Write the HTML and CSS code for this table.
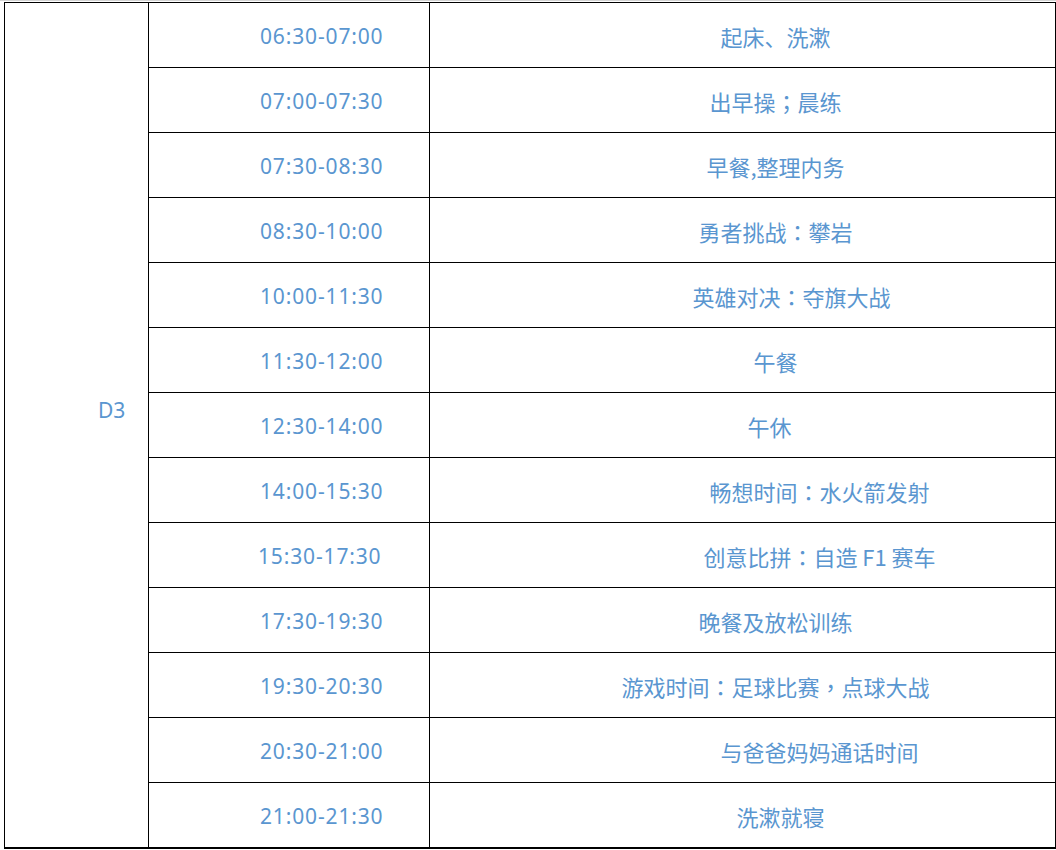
FILE: index.html
```html
<!DOCTYPE html>
<html lang="zh-CN">
<head>
<meta charset="utf-8">
<title>D3 日程</title>
<link rel="stylesheet" href="styles.css">
</head>
<body>
<div class="topline"></div>
<table class="schedule">
  <colgroup>
    <col class="c-day">
    <col class="c-time">
    <col class="c-act">
  </colgroup>
  <tbody>
    <tr>
      <td class="day" rowspan="13"><span class="day-label">D3</span></td>
      <td class="time">06:30-07:00</td>
      <td class="act">起床、洗漱</td>
    </tr>
    <tr><td class="time">07:00-07:30</td><td class="act">出早操<span class="fw" lang="zh-TW">；</span>晨练</td></tr>
    <tr><td class="time">07:30-08:30</td><td class="act">早餐,整理内务</td></tr>
    <tr><td class="time">08:30-10:00</td><td class="act">勇者挑战<span class="fw" lang="zh-TW">：</span>攀岩</td></tr>
    <tr><td class="time">10:00-11:30</td><td class="act shift-a">英雄对决<span class="fw" lang="zh-TW">：</span>夺旗大战</td></tr>
    <tr><td class="time">11:30-12:00</td><td class="act">午餐</td></tr>
    <tr><td class="time">12:30-14:00</td><td class="act shift-n">午休</td></tr>
    <tr><td class="time">14:00-15:30</td><td class="act shift-b">畅想时间<span class="fw" lang="zh-TW">：</span>水火箭发射</td></tr>
    <tr><td class="time time-wide">15:30-17:30</td><td class="act shift-b">创意比拼<span class="fw" lang="zh-TW">：</span>自造 F1 赛车</td></tr>
    <tr><td class="time">17:30-19:30</td><td class="act">晚餐及放松训练</td></tr>
    <tr><td class="time">19:30-20:30</td><td class="act">游戏时间<span class="fw" lang="zh-TW">：</span>足球比赛<span class="fw" lang="zh-TW">，</span>点球大战</td></tr>
    <tr><td class="time">20:30-21:00</td><td class="act shift-b">与爸爸妈妈通话时间</td></tr>
    <tr class="last"><td class="time">21:00-21:30</td><td class="act shift-c">洗漱就寝</td></tr>
  </tbody>
</table>
</body>
</html>
```

FILE: styles.css
```css
html, body {
  margin: 0;
  padding: 0;
  background: #ffffff;
}

body {
  width: 1056px;
  height: 850px;
  overflow: hidden;
  font-family: "Noto Sans CJK SC", "Noto Sans", sans-serif;
  color: #5a96d0;
}

.topline {
  height: 1px;
  background: #d4d4d4;
  width: 1056px;
}

.schedule {
  border-collapse: collapse;
  table-layout: fixed;
  margin: 1px 0 0 4px;
  width: 1051px;
  border-left: 1px solid #000;
  border-right: 1px solid #000;
  border-top: 1px solid #000;
  border-bottom: 2px solid #000;
}

.c-day { width: 144px; }
.c-time { width: 281px; }
.c-act { width: 626px; }

.schedule td {
  height: 63px;
  padding: 1px 0 0 0;
  border: 1px solid #000;
  vertical-align: middle;
  font-size: 22px;
  line-height: 24px;
  white-space: nowrap;
}

.schedule td.day {
  text-align: left;
  padding: 0 0 30px 93px;
  font-family: "Noto Sans", "Noto Sans CJK SC", sans-serif;
  font-size: 21px;
}

.schedule td.time {
  text-align: left;
  padding-left: 111px;
  font-family: "Noto Sans", "Noto Sans CJK SC", sans-serif;
  font-size: 21px;
  letter-spacing: 0.85px;
}

.schedule td.time-wide {
  padding-left: 109px;
}

.schedule td.act {
  text-align: center;
  padding-left: 66px;
}

.fw {
  font-family: "Noto Sans CJK TC", "Noto Sans CJK SC", sans-serif;
}

.schedule td.shift-a { padding-left: 98px; }
.schedule td.shift-b { padding-left: 154px; }
.schedule td.shift-c { padding-left: 76px; }
.schedule td.shift-n { padding-left: 54px; }
```
